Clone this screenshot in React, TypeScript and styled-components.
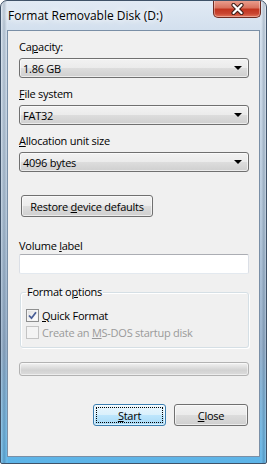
import styled, { createGlobalStyle } from "styled-components";

const GlobalStyle = createGlobalStyle`
  html, body { margin: 0; padding: 0; background: #fff; }
  body { font-family: "Open Sans", "Noto Sans", sans-serif; font-size: 11px; letter-spacing: -0.25px; color: #000; }
`;

const Window = styled.div`
  box-sizing: border-box;
  width: 267px;
  height: 464px;
  display: flex;
  flex-direction: column;
  border: 1px solid #3f5268;
  border-radius: 7px 7px 2px 2px;
  background:
    linear-gradient(90deg, rgba(255,255,255,0.25) 0, rgba(60,80,100,0.25) 3px, rgba(255,255,255,0.1) 6px, transparent 7px, transparent 259px, rgba(255,255,255,0.1) 260px, rgba(60,80,100,0.25) 263px, rgba(255,255,255,0.25) 100%),
    linear-gradient(180deg, #e1eaf4 0, #d3e0ee 28px, #b4c8dc 45%, #93aecb 75%, #6cb6e4 94%, #5cb4e8 100%);
  overflow: hidden;
`;

const TitleBar = styled.div`
  height: 29px;
  display: flex;
  align-items: flex-start;
  justify-content: space-between;
  padding: 0 5px 0 7px;
`;

const Title = styled.span`
  margin-top: 7px;
  font-size: 12px;
  letter-spacing: 0;
  line-height: 16px;
  color: #000;
  text-shadow: 0 0 6px #fff, 0 0 10px #fff;
`;

const CloseBox = styled.div`
  box-sizing: border-box;
  width: 48px;
  height: 18px;
  margin-top: -1px;
  display: flex;
  align-items: center;
  justify-content: center;
  border: 1px solid #6e2b22;
  border-top: none;
  border-radius: 0 0 5px 5px;
  background: linear-gradient(180deg, #eba393 0%, #d9735f 45%, #c2351f 55%, #c94632 80%, #e4745a 100%);
  box-shadow: inset 0 0 0 1px rgba(255,255,255,0.35);
`;

const Client = styled.div`
  flex: 1;
  margin: 0 6px 6px 6px;
  border: 1px solid #7a8fa6;
  background: #f0f0f0;
  padding: 8px 10px 0 11px;
  display: flex;
  flex-direction: column;
`;

const U = styled.u`
  text-decoration: underline;
  text-underline-offset: 1px;
`;

const FieldLabel = styled.div<{ $top: number }>`
  margin-top: ${(p) => p.$top}px;
  line-height: 16px;
  height: 16px;
`;

const Combo = styled.div`
  box-sizing: border-box;
  height: 20px;
  margin-top: 3px;
  padding: 0 6px 0 3px;
  display: flex;
  align-items: center;
  justify-content: space-between;
  border: 1px solid #707070;
  border-radius: 3px;
  background: linear-gradient(180deg, #f2f2f2 0%, #ebebeb 50%, #dddddd 50%, #cfcfcf 100%);
  box-shadow: inset 0 0 0 1px rgba(255,255,255,0.6);
`;

const ComboArrow = styled.span`
  width: 0;
  height: 0;
  border-left: 4px solid transparent;
  border-right: 4px solid transparent;
  border-top: 4px solid #000;
`;

const PushButton = styled.div<{ $width: number; $default?: boolean }>`
  box-sizing: border-box;
  width: ${(p) => p.$width}px;
  height: 22px;
  display: flex;
  align-items: center;
  justify-content: center;
  border: 1px solid ${(p) => (p.$default ? "#3c7fb1" : "#707070")};
  border-radius: 3px;
  background: ${(p) =>
    p.$default
      ? "linear-gradient(180deg, #eaf6fd 0%, #d9f0fc 50%, #bee6fd 50%, #a7d9f5 100%)"
      : "linear-gradient(180deg, #f2f2f2 0%, #ebebeb 50%, #dddddd 50%, #cfcfcf 100%)"};
  box-shadow: inset 0 0 0 1px rgba(255,255,255,0.6);
  outline: ${(p) => (p.$default ? "1px dotted #000" : "none")};
  outline-offset: -4px;
`;

const RestoreButton = styled(PushButton)`
  margin: 23px 0 0 2px;
`;

const TextBox = styled.div`
  box-sizing: border-box;
  height: 20px;
  background: #fff;
  border: 1px solid #dbdfe6;
  border-top-color: #abadb3;
  border-bottom-color: #e3e9ef;
  border-radius: 2px;
`;

const Group = styled.fieldset`
  margin: 10px 0 0 1px;
  padding: 0 0 7px 5px;
  border: 1px solid #d5dfe5;
  border-radius: 3px;
  box-shadow: inset 1px 1px 0 #fff, 1px 1px 0 #fff;
`;

const GroupLegend = styled.legend`
  padding: 0 1px;
  line-height: 16px;
`;

const CheckList = styled.div`
  margin-top: 7px;
  display: flex;
  flex-direction: column;
  gap: 1px;
`;

const CheckRow = styled.div<{ $disabled?: boolean }>`
  height: 16px;
  display: flex;
  align-items: center;
  gap: 3px;
  color: ${(p) => (p.$disabled ? "#9a9a9a" : "#000")};
`;

const CheckBox = styled.span<{ $disabled?: boolean }>`
  box-sizing: border-box;
  width: 13px;
  height: 13px;
  display: flex;
  align-items: center;
  justify-content: center;
  border: 1px solid ${(p) => (p.$disabled ? "#c4c4c4" : "#8e8f8f")};
  background: ${(p) => (p.$disabled ? "#f4f4f4" : "linear-gradient(135deg, #dcdcdc 0%, #f6f6f6 60%, #ffffff 100%)")};
  box-shadow: inset 0 0 0 1px #f4f4f4;
`;

const Progress = styled.div`
  box-sizing: border-box;
  height: 14px;
  margin-top: 14px;
  border: 1px solid #b2b2b2;
  border-radius: 3px;
  background: linear-gradient(180deg, #f3f3f3 0%, #e2e2e2 30%, #d2d2d2 60%, #dcdcdc 100%);
  box-shadow: inset 0 0 0 1px rgba(255,255,255,0.5);
`;

const ButtonRow = styled.div`
  margin-top: 28px;
  padding-right: 1px;
  display: flex;
  justify-content: flex-end;
  gap: 8px;
`;

export default function App() {
  return (
    <>
      <GlobalStyle />
      <Window>
        <TitleBar>
          <Title>Format Removable Disk (D:)</Title>
          <CloseBox>
            <svg width="15" height="12" viewBox="0 0 15 12">
              <path d="M3.5 2 L11.5 10 M11.5 2 L3.5 10" stroke="#3b1d18" strokeWidth="4.2" strokeLinecap="round" fill="none" />
              <path d="M3.5 2 L11.5 10 M11.5 2 L3.5 10" stroke="#fff" strokeWidth="2.2" strokeLinecap="round" fill="none" />
            </svg>
          </CloseBox>
        </TitleBar>
        <Client>
          <FieldLabel $top={0}>
            Ca<U>p</U>acity:
          </FieldLabel>
          <Combo>
            <span>1.86 GB</span>
            <ComboArrow />
          </Combo>
          <FieldLabel $top={8}>
            <U>F</U>ile system
          </FieldLabel>
          <Combo>
            <span>FAT32</span>
            <ComboArrow />
          </Combo>
          <FieldLabel $top={8}>
            <U>A</U>llocation unit size
          </FieldLabel>
          <Combo>
            <span>4096 bytes</span>
            <ComboArrow />
          </Combo>
          <RestoreButton $width={132}>
            <span>
              Restore <U>d</U>evice defaults
            </span>
          </RestoreButton>
          <FieldLabel $top={21}>
            Volume <U>l</U>abel
          </FieldLabel>
          <TextBox />
          <Group>
            <GroupLegend>
              Format o<U>p</U>tions
            </GroupLegend>
            <CheckList>
              <CheckRow>
                <CheckBox>
                  <svg width="9" height="9" viewBox="0 0 9 9">
                    <path d="M1 4.5 L3.5 7.2 L8 1.2" stroke="#4a5f97" strokeWidth="1.8" fill="none" />
                  </svg>
                </CheckBox>
                <span>
                  <U>Q</U>uick Format
                </span>
              </CheckRow>
              <CheckRow $disabled>
                <CheckBox $disabled />
                <span>
                  Create an <U>M</U>S-DOS startup disk
                </span>
              </CheckRow>
            </CheckList>
          </Group>
          <Progress />
          <ButtonRow>
            <PushButton $width={73} $default>
              <span>
                <U>S</U>tart
              </span>
            </PushButton>
            <PushButton $width={74}>
              <span>
                <U>C</U>lose
              </span>
            </PushButton>
          </ButtonRow>
        </Client>
      </Window>
    </>
  );
}
